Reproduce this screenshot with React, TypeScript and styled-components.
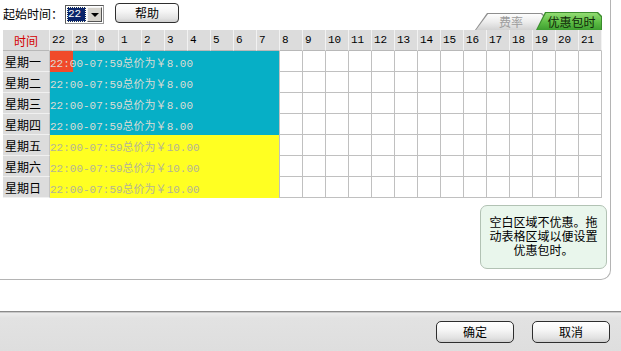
import React from 'react';
import styled, { createGlobalStyle } from 'styled-components';

const GlobalStyle = createGlobalStyle`
  html, body {
    margin: 0;
    padding: 0;
    background: #fff;
    width: 621px;
    height: 351px;
    overflow: hidden;
    font-family: "Noto Sans CJK SC", "DejaVu Sans", sans-serif;
    font-size: 12px;
    color: #000;
  }
`;

const CYAN = '#06afc6';
const YELLOW = '#ffff22';
const RED = '#f04a2a';

const Window = styled.div`
  display: flex;
  flex-direction: column;
  justify-content: space-between;
  width: 621px;
  height: 351px;
`;

const Panel = styled.div`
  box-sizing: border-box;
  width: 611px;
  height: 280px;
  padding: 0 3px 0 3px;
  border-right: 1px solid #b4b4b4;
  border-bottom: 1px solid #b4b4b4;
  border-bottom-right-radius: 10px;
`;

const TopBar = styled.div`
  display: flex;
  justify-content: space-between;
  align-items: flex-end;
  height: 30px;
`;

const Controls = styled.div`
  display: flex;
  align-items: center;
  align-self: flex-start;
  height: 28px;
`;

const Label = styled.span`
  font-size: 12px;
  line-height: 14px;
  white-space: nowrap;
`;

const SelectBox = styled.div`
  box-sizing: border-box;
  display: flex;
  width: 39px;
  height: 19px;
  margin-left: 2px;
  padding: 1px;
  border: 1px solid #5a5a5a;
  border-right-color: #9a9a9a;
  border-bottom-color: #9a9a9a;
  background: #fff;
`;

const SelectValue = styled.span`
  box-sizing: border-box;
  width: 19px;
  height: 15px;
  background: #0a246a;
  color: #fff;
  font-family: "Liberation Mono", monospace;
  font-size: 11px;
  line-height: 14px;
  padding-left: 1px;
  outline: 1px dotted #ffd;
  outline-offset: -1px;
`;

const SelectArrow = styled.span`
  box-sizing: border-box;
  display: flex;
  align-items: center;
  justify-content: center;
  flex: 1;
  margin-left: 1px;
  background: #d6d3cc;
  border: 1px solid;
  border-color: #f4f4f4 #555 #555 #f4f4f4;

  &::after {
    content: '';
    border-left: 4px solid transparent;
    border-right: 4px solid transparent;
    border-top: 4px solid #000;
    margin-top: 1px;
  }
`;

const PushButton = styled.button<{ $w: number; $h: number }>`
  box-sizing: border-box;
  width: ${p => p.$w}px;
  height: ${p => p.$h}px;
  padding: 0;
  border: 1px solid #2e2e2e;
  border-radius: 5px;
  background: linear-gradient(#ffffff, #f6f6f6 40%, #e2e2e2 80%, #cfcfcf);
  font-family: "Noto Sans CJK SC", sans-serif;
  font-size: 12px;
  line-height: 14px;
  color: #000;
`;

const HelpButton = styled(PushButton)`
  margin-left: 11px;
  margin-top: -2px;
  border-radius: 4px;
`;

const Tabs = styled.div`
  display: flex;
  align-items: flex-end;
  padding-right: 5px;
`;

const tabShape = (slant: number) =>
  `polygon(0 100%, ${slant}px 0, calc(100% - 4px) 0, 100% 4px, 100% 100%)`;

const Tab = styled.div<{ $active?: boolean }>`
  box-sizing: border-box;
  display: flex;
  width: ${p => (p.$active ? 66 : 71)}px;
  height: ${p => (p.$active ? 18 : 17)}px;
  margin-left: ${p => (p.$active ? -10 : 0)}px;
  padding: 1px 1px 0 1px;
  background: ${p => (p.$active ? '#3a8c2c' : '#8e8e8e')};
  clip-path: ${p => tabShape(p.$active ? 9 : 12)};
`;

const TabFace = styled.div<{ $active?: boolean }>`
  display: flex;
  align-items: center;
  justify-content: center;
  flex: 1;
  padding: ${p => (p.$active ? '0 4px 0 9px' : '0 10px 0 11px')};
  background: ${p =>
    p.$active
      ? 'linear-gradient(#92dc72, #5cbc44 55%, #3e9e30)'
      : 'linear-gradient(#fdfdfd, #ececec 50%, #d2d2d2)'};
  color: ${p => (p.$active ? '#102808' : '#9c9c9c')};
  clip-path: ${p => tabShape(p.$active ? 9 : 12)};
  font-size: 12px;
  line-height: 14px;
  white-space: nowrap;
`;

const Grid = styled.div`
  display: grid;
  grid-template-columns: 47px repeat(24, 23px);
  grid-template-rows: repeat(8, 21px);
  width: 599px;
`;

const HeadCell = styled.div<{ $corner?: boolean }>`
  box-sizing: border-box;
  display: flex;
  align-items: center;
  justify-content: ${p => (p.$corner ? 'center' : 'flex-start')};
  padding-left: ${p => (p.$corner ? 0 : 2)}px;
  background: #dcdcdc;
  border-right: 1px solid #f2f2f2;
  border-bottom: 1px solid #b8b8b8;
  color: ${p => (p.$corner ? '#d40000' : '#000')};
  font-family: ${p =>
    p.$corner ? '"Noto Sans CJK SC", sans-serif' : '"Liberation Mono", monospace'};
  font-size: ${p => (p.$corner ? 12 : 11)}px;
`;

const DayCell = styled.div`
  box-sizing: border-box;
  display: flex;
  align-items: center;
  padding-left: 2px;
  background: #dcdcdc;
  border-right: 1px solid #c4c4c4;
  border-bottom: 1px solid #f0f0f0;
  font-size: 12px;
`;

const Cell = styled.div`
  box-sizing: border-box;
  background: #fff;
  border-right: 1px solid #c0c0c0;
  border-bottom: 1px solid #c0c0c0;
`;

const Block = styled.div<{ $color: string; $ink: string; $mark?: boolean }>`
  grid-column: span 10;
  display: flex;
  align-items: center;
  background: ${p =>
    p.$mark
      ? `linear-gradient(to right, ${RED} 0 23px, ${p.$color} 23px)`
      : p.$color};
  border-right: 1px solid #c0c0c0;
  color: ${p => p.$ink};
  font-family: "Liberation Mono", "Noto Sans CJK SC", monospace;
  font-size: 11px;
  white-space: nowrap;
  overflow: hidden;
`;

const TipRow = styled.div`
  display: flex;
  justify-content: flex-end;
  margin-top: 7px;
`;

const Tip = styled.div`
  box-sizing: border-box;
  width: 127px;
  height: 64px;
  padding: 9px 6px 0;
  border: 1px solid #b2c2b4;
  border-radius: 7px;
  background: #e9f6ec;
  text-align: center;
  font-size: 12px;
  line-height: 14px;
`;

const BottomBar = styled.div`
  box-sizing: border-box;
  display: flex;
  justify-content: flex-end;
  align-items: flex-start;
  gap: 18px;
  height: 40px;
  padding: 9px 11px 0 0;
  border-top: 1px solid #8a8a8a;
  background: linear-gradient(#c8c8c8 0 1px, #ececec 1px, #e2e2e2 6px, #dedede);
`;

const hours = [22, 23, 0, 1, 2, 3, 4, 5, 6, 7, 8, 9, 10, 11, 12, 13, 14, 15, 16, 17, 18, 19, 20, 21];

const days = [
  { day: '星期一', color: CYAN, ink: '#dcdcd4', price: '8.00', mark: true },
  { day: '星期二', color: CYAN, ink: '#dcdcd4', price: '8.00' },
  { day: '星期三', color: CYAN, ink: '#dcdcd4', price: '8.00' },
  { day: '星期四', color: CYAN, ink: '#dcdcd4', price: '8.00' },
  { day: '星期五', color: YELLOW, ink: '#b4b496', price: '10.00' },
  { day: '星期六', color: YELLOW, ink: '#b4b496', price: '10.00' },
  { day: '星期日', color: YELLOW, ink: '#b4b496', price: '10.00' },
];

const App: React.FC = () => {
  return (
    <Window>
      <GlobalStyle />
      <Panel>
        <TopBar>
          <Controls>
            <Label>起始时间：</Label>
            <SelectBox>
              <SelectValue>22</SelectValue>
              <SelectArrow />
            </SelectBox>
            <HelpButton $w={64} $h={20}>帮助</HelpButton>
          </Controls>
          <Tabs>
            <Tab>
              <TabFace>费率</TabFace>
            </Tab>
            <Tab $active>
              <TabFace $active>优惠包时</TabFace>
            </Tab>
          </Tabs>
        </TopBar>
        <Grid>
          <HeadCell $corner>时间</HeadCell>
          {hours.map(h => (
            <HeadCell key={h}>{h}</HeadCell>
          ))}
          {days.map(d => (
            <React.Fragment key={d.day}>
              <DayCell>{d.day}</DayCell>
              <Block $color={d.color} $ink={d.ink} $mark={d.mark}>
                22:00-07:59总价为￥{d.price}
              </Block>
              {hours.slice(10).map(h => (
                <Cell key={h} />
              ))}
            </React.Fragment>
          ))}
        </Grid>
        <TipRow>
          <Tip>
            空白区域不优惠。拖
            <br />
            动表格区域以便设置
            <br />
            优惠包时。
          </Tip>
        </TipRow>
      </Panel>
      <BottomBar>
        <PushButton $w={78} $h={22}>确定</PushButton>
        <PushButton $w={78} $h={22}>取消</PushButton>
      </BottomBar>
    </Window>
  );
};

export default App;
